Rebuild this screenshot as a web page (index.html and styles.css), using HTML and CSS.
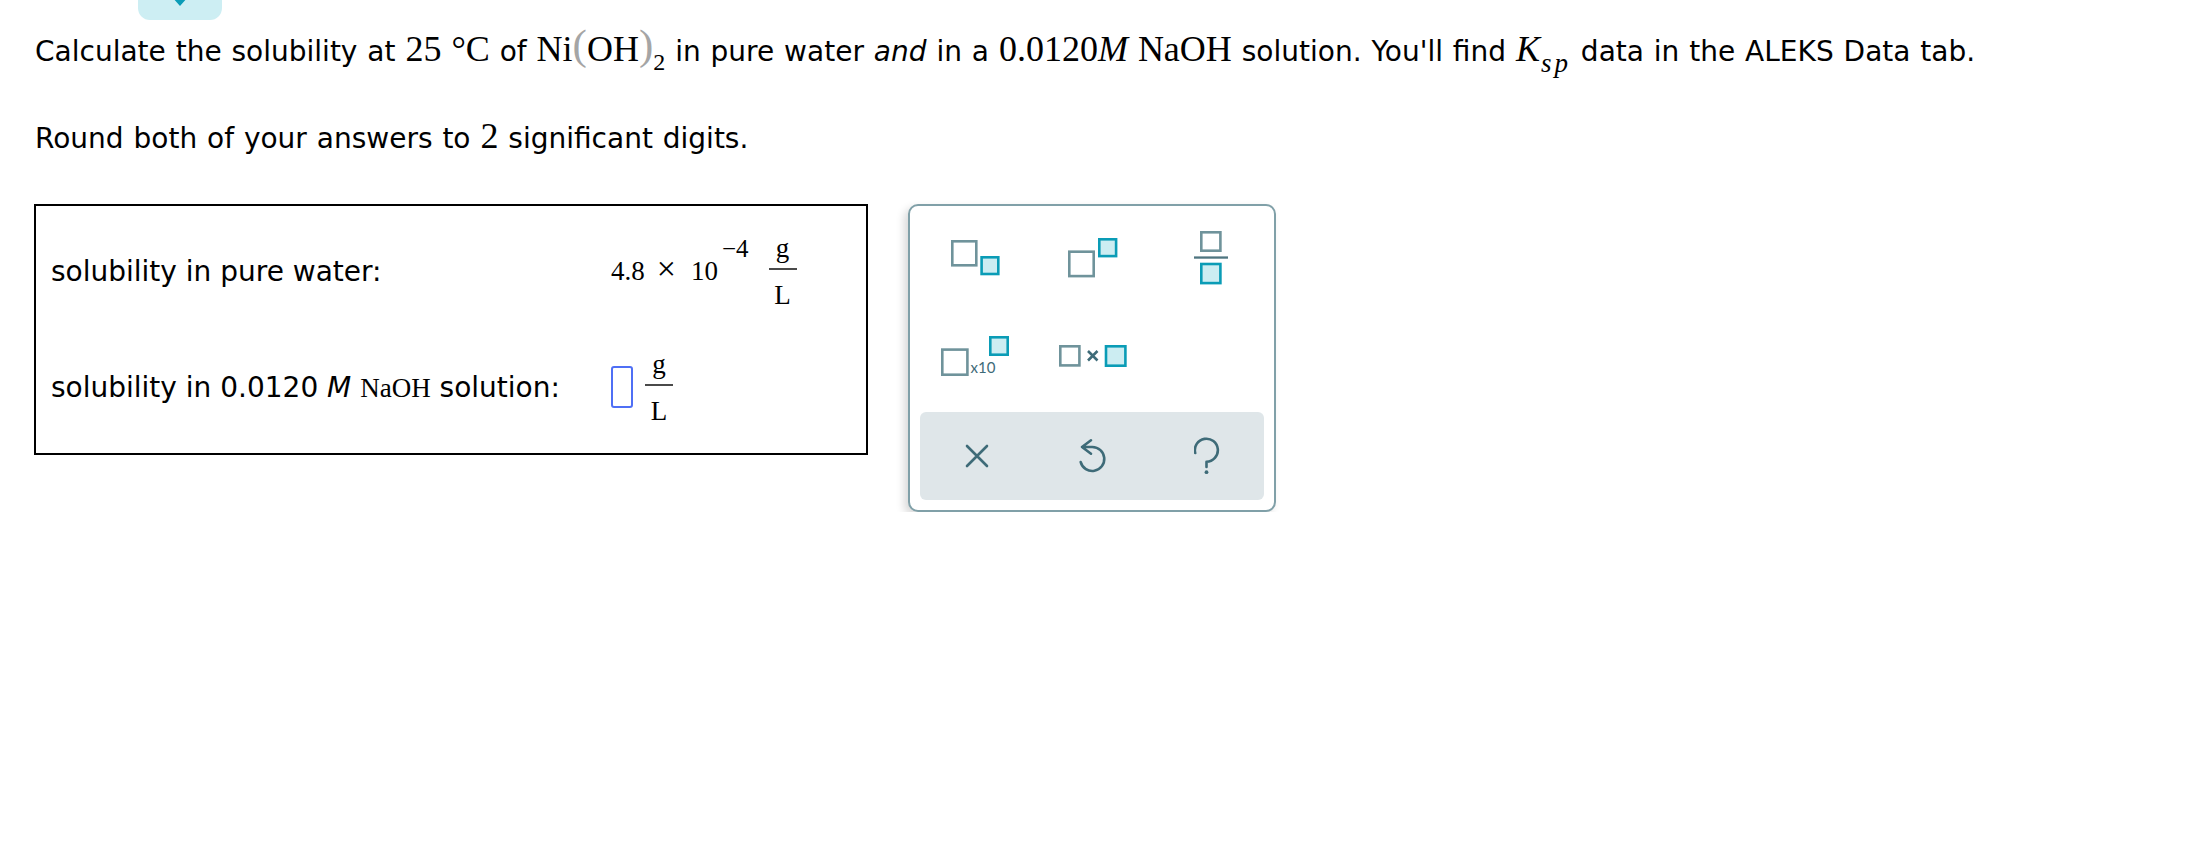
FILE: index.html
```html
<!DOCTYPE html>
<html lang="en">
<head>
    <meta charset="UTF-8">
    <title>Solubility of Ni(OH)2</title>
    <link rel="stylesheet" href="styles.css">
</head>
<body>
    <div class="tab">
        <svg width="84" height="20" viewBox="0 0 84 20"><path d="M34 -6 L42 3 L50 -6" fill="none" stroke="#0b9cb7" stroke-width="4"/></svg>
    </div>

    <div class="question">
        <p class="first">Calculate the solubility at <span class="m">25 °C</span> of <span class="m">Ni<span class="paren">(</span>OH<span class="paren">)</span><sub class="low">2</sub></span> in pure water <i>and</i> in a <span class="m">0.0120<i>M</i> NaOH</span> solution. You'll find <span class="m"><i>K</i><sub><i>sp</i></sub></span> data in the ALEKS Data tab.</p>
        <p class="second">Round both of your answers to <span class="m">2</span> significant digits.</p>
    </div>

    <div class="work">
        <div class="answers">
            <div class="label">solubility in pure water:</div>
            <div class="answer">
                <span class="sci">4.8<span class="times">×</span>10<span class="exp">−4</span></span>
                <span class="frac"><span class="top">g</span><span class="bot">L</span></span>
            </div>

            <div class="label">solubility in 0.0120 <i>M</i> <span class="serif">NaOH</span> solution:</div>
            <div class="answer">
                <span class="input"></span>
                <span class="frac"><span class="top">g</span><span class="bot">L</span></span>
            </div>
        </div>

        <div class="panel">
            <div class="keys">
                <!-- subscript -->
                <button class="key">
                    <svg width="49" height="36" viewBox="0 0 49 36">
                        <rect class="box" x="1.3" y="1.3" width="24" height="24"/>
                        <rect class="slot" x="30.6" y="17.3" width="16.7" height="16.7"/>
                    </svg>
                </button>
                <!-- superscript -->
                <button class="key">
                    <svg width="50" height="40" viewBox="0 0 50 40">
                        <rect class="box" x="1.3" y="13.7" width="24.4" height="24.4"/>
                        <rect class="slot" x="31.3" y="1.3" width="16.8" height="16.8"/>
                    </svg>
                </button>
                <!-- fraction -->
                <button class="key">
                    <svg width="34" height="54" viewBox="0 0 34 54">
                        <rect class="box" x="7.3" y="1.3" width="19.1" height="18.4"/>
                        <rect x="0" y="25.4" width="34" height="2.3" fill="#4f7580"/>
                        <rect class="slot" x="7.3" y="33" width="19.1" height="19.1"/>
                    </svg>
                </button>
                <!-- x10 -->
                <button class="key">
                    <svg width="68" height="40" viewBox="0 0 68 40">
                        <rect class="box" x="1.3" y="13.6" width="25.1" height="25.1"/>
                        <text x="29.5" y="37" class="ten">x10</text>
                        <rect class="slot" x="49.3" y="1.3" width="17.4" height="17.4"/>
                    </svg>
                </button>
                <!-- times -->
                <button class="key">
                    <svg width="68" height="22" viewBox="0 0 68 22">
                        <rect class="box" x="1.3" y="1.3" width="19.1" height="19.1"/>
                        <path d="M29 6 L38.5 15.5 M38.5 6 L29 15.5" stroke="#3e6b78" stroke-width="2.6"/>
                        <rect class="slot" x="47" y="1.3" width="19.4" height="19.4"/>
                    </svg>
                </button>
            </div>

            <div class="tools">
                <button class="tool">
                    <svg width="24" height="24" viewBox="0 0 24 24"><path d="M2 2 L22 22 M22 2 L2 22" class="line"/></svg>
                </button>
                <button class="tool">
                    <svg width="30" height="36" viewBox="0 0 30 36"><path d="M14 2.3 L5 9 L14 15.7 M5 9 H15.3 A12 12 0 1 1 3.7 24.1" class="line"/></svg>
                </button>
                <button class="tool">
                    <svg width="26" height="38" viewBox="0 0 26 38"><path d="M1.2 16 A11.5 11.5 0 1 1 12.5 24.7 V30" class="line"/><circle cx="12.5" cy="35.2" r="1.9" fill="#3e6b78"/></svg>
                </button>
            </div>
        </div>
    </div>
</body>
</html>
```

FILE: styles.css
```css
body {
    margin: 0;
    font-family: "DejaVu Sans", Verdana, sans-serif;
    font-size: 28px;
    color: #000;
    background-color: #fff;
}

/* little tab hanging from the top edge */
.tab {
    width: 84px;
    height: 20px;
    margin-left: 138px;
    background-color: #cdeef3;
    border-radius: 0 0 12px 12px;
    overflow: hidden;
}
.tab svg {
    display: block;
}

.question {
    padding: 0 35px;
    word-spacing: 1px;
}
.question p {
    margin: 0;
    line-height: 40px;
    white-space: nowrap;
}
.question .first {
    margin-top: 9px;
}
.question .second {
    margin-top: 44px;
}

/* inline math */
.m {
    font-family: "Liberation Serif", "Times New Roman", serif;
    font-size: 36px;
}
.m sub {
    font-size: 27px;
    vertical-align: -11px;
    line-height: 0;
    margin-left: 1px;
    letter-spacing: 3px;
}
.m sub.low {
    font-size: 24px;
    vertical-align: -9px;
    margin-left: 0;
    letter-spacing: 0;
}
.paren {
    color: #a5a5a5;
    font-size: 43px;
    line-height: 0;
    vertical-align: 2px;
}

.work {
    display: flex;
    align-items: flex-start;
    gap: 40px;
    margin-top: 45px;
    padding-left: 34px;
}

/* answer box */
.answers {
    box-sizing: border-box;
    width: 834px;
    height: 251px;
    border: 2px solid #000;
    display: grid;
    grid-template-columns: 560px 1fr;
    grid-template-rows: 80px 80px;
    row-gap: 36px;
    align-items: center;
    padding: 25px 0 26px 15px;
}
.label {
    white-space: nowrap;
}
.label .serif {
    font-family: "Liberation Serif", "Times New Roman", serif;
    font-size: 27px;
}
.answer {
    display: flex;
    align-items: center;
    font-family: "Liberation Serif", "Times New Roman", serif;
    font-size: 27px;
}
.sci {
    line-height: 30px;
    margin-bottom: 8px;
}
.times {
    font-size: 34px;
    line-height: 0;
    margin: 0 15px 0 12px;
}
.exp {
    font-size: 25px;
    vertical-align: 23px;
    line-height: 0;
    margin-left: 4px;
}
.frac {
    display: flex;
    flex-direction: column;
    width: 28px;
    margin-left: 20px;
    text-align: center;
}
.frac .top {
    line-height: 26px;
    padding-bottom: 7px;
    border-bottom: 2px solid #4a4a4a;
}
.frac .bot {
    line-height: 26px;
    padding-top: 12px;
}
.input {
    box-sizing: border-box;
    width: 22px;
    height: 42px;
    border: 2px solid #4f6ff5;
    border-radius: 3px;
}
.input + .frac {
    margin-left: 12px;
}

/* editor palette */
.panel {
    box-sizing: border-box;
    width: 368px;
    height: 308px;
    padding: 14px 0 10px;
    border: 2px solid #80a0a8;
    border-radius: 10px;
    background-color: #fff;
    box-shadow: -4px 4px 9px rgba(0, 0, 0, 0.15);
}
.keys {
    display: grid;
    grid-template-columns: repeat(3, 118px);
    grid-auto-rows: 76px;
    row-gap: 22px;
    padding: 0 4px 0 6px;
}
.key, .tool {
    border: none;
    background: none;
    padding: 0;
    display: flex;
    align-items: center;
    justify-content: center;
}
.key svg, .tool svg {
    display: block;
}
.box {
    fill: none;
    stroke: #6f939b;
    stroke-width: 2.6;
}
.slot {
    fill: #ccedf2;
    stroke: #0a9cb6;
    stroke-width: 2.6;
}
.ten {
    font-family: Lato, "Open Sans", sans-serif;
    font-size: 15px;
    fill: #3e6b78;
}
.tools {
    display: grid;
    grid-template-columns: repeat(3, 1fr);
    height: 88px;
    margin: 18px 10px 0;
    background-color: #dfe6e9;
    border-radius: 6px;
}
.line {
    fill: none;
    stroke: #3e6b78;
    stroke-width: 2.6;
    stroke-linecap: round;
    stroke-linejoin: round;
}
```
